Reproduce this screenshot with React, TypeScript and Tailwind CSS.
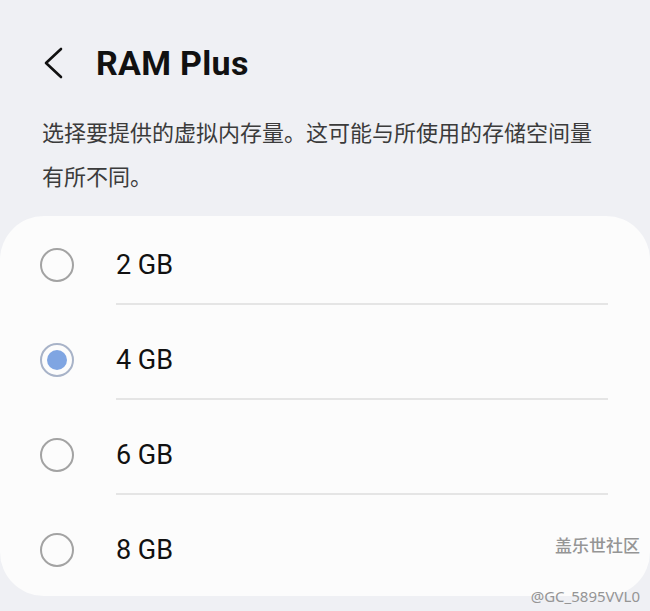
import { useState } from "react";

const options = ["2 GB", "4 GB", "6 GB", "8 GB"];

function Radio({ checked }: { checked: boolean }) {
  return (
    <span
      className={`w-[34px] h-[34px] rounded-full border-2 flex items-center justify-center shrink-0 ${
        checked ? "border-[#a8b3c8]" : "border-[#a3a3a3]"
      }`}
    >
      {checked && <span className="w-[20px] h-[20px] rounded-full bg-[#7fa5e2]" />}
    </span>
  );
}

export default function App() {
  const [selected, setSelected] = useState("4 GB");

  return (
    <div
      className="relative w-[650px] h-[611px] overflow-hidden bg-[#eff0f4] text-[#111]"
      style={{ fontFamily: 'Roboto, "Noto Sans CJK SC", "Noto Sans", sans-serif' }}
    >
      {/* Header */}
      <header className="flex items-center h-[126px]">
        <button className="w-[96px] h-[40px] flex items-center pl-[42px]" aria-label="Back">
          <svg width="22" height="32" viewBox="0 0 22 32" fill="none">
            <path d="M19 2 L4 16 L19 30" stroke="#111" strokeWidth="2.6" strokeLinecap="round" strokeLinejoin="round" />
          </svg>
        </button>
        <h1 className="text-[34px] font-bold tracking-[0.3px] leading-none">RAM Plus</h1>
      </header>

      <p className="px-[42px] text-[22px] leading-[44px] text-[#3b3b3b] -mt-[14px]">
        选择要提供的虚拟内存量。这可能与所使用的存储空间量有所不同。
      </p>

      {/* Options card */}
      <div className="mt-[16px] bg-[#fcfcfc] rounded-[44px] pt-[11px] pb-[8px]">
        {options.map((o, i) => {
          const last = i === options.length - 1;
          return (
            <div
              key={o}
              onClick={() => setSelected(o)}
              className={`flex items-start cursor-pointer ${last ? "h-[76px]" : "h-[95px]"}`}
            >
              <div className="w-[116px] h-[76px] flex items-center pl-[40px]">
                <Radio checked={selected === o} />
              </div>
              <div
                className={`flex-1 mr-[42px] flex items-center text-[27px] ${
                  last ? "h-[76px]" : "h-[78px] border-b-2 border-[#e5e5e5]"
                }`}
              >
                {o}
              </div>
            </div>
          );
        })}
      </div>

      {/* Watermark */}
      <div className="absolute right-[10px] bottom-[7px] flex flex-col items-end text-[#959595] leading-none">
        <span className="text-[17px] font-medium mb-[36px]" style={{ fontFamily: '"Noto Sans CJK SC", sans-serif' }}>
          盖乐世社区
        </span>
        <span className="text-[15px]" style={{ fontFamily: '"Noto Sans", sans-serif' }}>
          @GC_5895VVL0
        </span>
      </div>
    </div>
  );
}
